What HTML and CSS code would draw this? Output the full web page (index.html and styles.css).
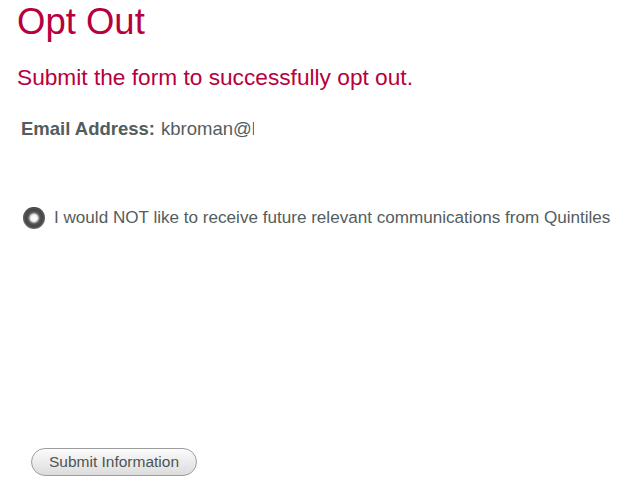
FILE: index.html
```html
<!DOCTYPE html>
<html lang="en">
<head>
<meta charset="utf-8">
<title>Opt Out</title>
<link rel="stylesheet" href="styles.css">
</head>
<body>
<main class="page">
  <h1 class="title">Opt Out</h1>
  <p class="subtitle">Submit the form to successfully opt out.</p>
  <div class="email-row">
    <span class="email-label">Email Address:</span>
    <input class="email-value" type="text" value="kbroman@biostat.wisc.edu" readonly>
  </div>
  <label class="radio-row">
    <span class="radio"></span>
    <span class="radio-text">I would NOT like to receive future relevant communications from Quintiles</span>
  </label>
  <div class="actions">
    <button class="submit" type="button">Submit Information</button>
  </div>
</main>
</body>
</html>
```
FILE: styles.css
```css
html, body {
  margin: 0;
  padding: 0;
  background: #ffffff;
}
body {
  font-family: "Liberation Sans", Arial, Helvetica, sans-serif;
  color: #535d5e;
}
.page {
  display: flex;
  flex-direction: column;
  padding: 0 0 0 17px;
}
.title {
  margin: 0;
  font-size: 36.5px;
  font-weight: normal;
  line-height: 44px;
  color: #b7003e;
}
.subtitle {
  margin: 20px 0 0 0;
  font-size: 22.7px;
  line-height: 26px;
  color: #b7003e;
}
.email-row {
  display: flex;
  align-items: baseline;
  margin: 29px 0 0 4px;
  font-size: 18.5px;
  line-height: 20px;
}
.email-label {
  font-weight: bold;
  color: #535d5e;
}
.email-value {
  margin: 0 0 0 6px;
  padding: 0;
  border: none;
  outline: none;
  width: 93px;
  font-family: inherit;
  font-size: 18.5px;
  line-height: 20px;
  color: #535d5e;
  background: transparent;
}
.radio-row {
  display: flex;
  align-items: center;
  gap: 9px;
  margin: 68px 0 0 6px;
  font-size: 17.1px;
  line-height: 22px;
}
.radio {
  width: 22px;
  height: 22px;
  border-radius: 50%;
  box-sizing: border-box;
  background: radial-gradient(circle at 50% 50%, #ffffff 0, #f2f2f2 3.4px, #a0a0a0 4.6px, #555555 6px, #454545 8.5px, #6e6e6e 11px);
  box-shadow: inset 0 1px 1px rgba(0,0,0,0.4);
  flex: none;
}
.radio-text {
  color: #535d5e;
}
.actions {
  display: flex;
  margin: 219px 0 0 14px;
}
.submit {
  width: 166px;
  height: 28px;
  padding: 0;
  border: 1px solid #9d9d9d;
  border-radius: 14px;
  background: linear-gradient(to bottom, #fbfbfb 0%, #ececec 50%, #dcdcdc 100%);
  font-family: "Liberation Sans", Arial, sans-serif;
  font-size: 15.5px;
  color: #4c5455;
}
```
